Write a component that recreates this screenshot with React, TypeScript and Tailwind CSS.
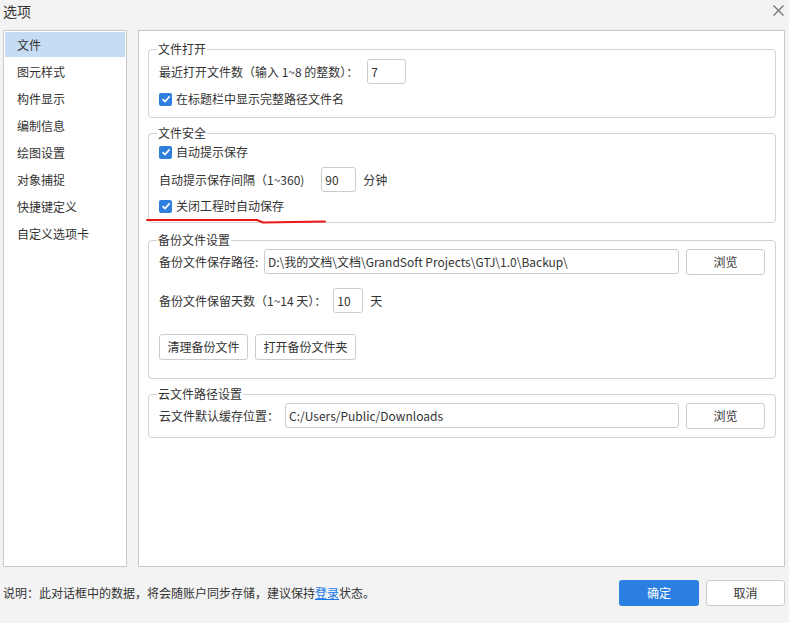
const font = "font-['Noto_Sans_CJK_SC','Noto_Sans',sans-serif]";

const navItems = ["文件", "图元样式", "构件显示", "编制信息", "绘图设置", "对象捕捉", "快捷键定义", "自定义选项卡"];

function Check({ label }: { label: string }) {
  return (
    <div className="flex h-[20px] items-center gap-[4px]">
      <span className="flex h-[13px] w-[13px] items-center justify-center rounded-[2px] bg-[#2f7fdf]">
        <svg width="10" height="10" viewBox="0 0 10 10" fill="none">
          <path d="M1.5 5.2 L4 7.6 L8.6 2.4" stroke="white" strokeWidth="1.6" />
        </svg>
      </span>
      <span>{label}</span>
    </div>
  );
}

function Group({ title, children, className = "" }: { title: string; children: React.ReactNode; className?: string }) {
  return (
    <fieldset className={`rounded-[4px] border border-[#d2d2d2] px-[10px] ${className}`}>
      <legend className="ml-[-2px] px-[1px] leading-[18px]">{title}</legend>
      {children}
    </fieldset>
  );
}

function Input({ value, className = "" }: { value: string; className?: string }) {
  return (
    <div className={`flex h-[25px] items-center rounded-[3px] border border-[#cccccc] bg-white px-[3px] ${className}`}>
      {value}
    </div>
  );
}

function Btn({ label, className = "" }: { label: string; className?: string }) {
  return (
    <div className={`flex h-[26px] items-center justify-center rounded-[3px] border border-[#cccccc] bg-white ${className}`}>
      {label}
    </div>
  );
}

export default function App() {
  return (
    <div className={`relative flex h-[623px] w-[789px] flex-col bg-[#f3f3f3] text-[12px] text-[#333] ${font}`}>
      {/* Title bar */}
      <div className="flex h-[30px] items-start justify-between pl-[3px] pr-[5px]">
        <span className="mt-[2px] text-[14px] leading-[18px]">选项</span>
        <svg className="mt-[5px]" width="11" height="11" viewBox="0 0 11 11" fill="none">
          <path d="M0.5 0.5 L10.5 10.5 M10.5 0.5 L0.5 10.5" stroke="#6f6f6f" strokeWidth="1.2" />
        </svg>
      </div>

      <div className="flex h-[537px] pl-[3px] pr-[4px]">
        {/* Sidebar */}
        <div className="flex w-[124px] flex-col gap-[2px] border border-[#c9c9c9] bg-white p-[1px]">
          {navItems.map((item, i) => (
            <div
              key={item}
              className={`flex h-[25px] items-center pl-[12px] ${i === 0 ? "bg-[#c5dcf2]" : ""}`}
            >
              {item}
            </div>
          ))}
        </div>

        {/* Content panel */}
        <div className="ml-[11px] flex flex-1 flex-col gap-[6px] border border-[#c9c9c9] bg-white pl-[9px] pr-[8px] pt-[9px]">
          <Group title="文件打开" className="pb-[8px]">
            <div className="mt-[1px] flex h-[25px] items-center">
              <span>最近打开文件数（输入 1~8 的整数）：</span>
              <Input value="7" className="ml-[9px] w-[39px]" />
            </div>
            <div className="mt-[5px]">
              <Check label="在标题栏中显示完整路径文件名" />
            </div>
          </Group>

          <Group title="文件安全" className="pb-[6px]">
            <Check label="自动提示保存" />
            <div className="mt-[5px] flex h-[25px] items-center">
              <span>自动提示保存间隔（1~360)</span>
              <Input value="90" className="ml-[17px] w-[35px]" />
              <span className="ml-[7px]">分钟</span>
            </div>
            <div className="mt-[4px]">
              <Check label="关闭工程时自动保存" />
            </div>
          </Group>

          <Group title="备份文件设置" className="mt-[2px] pb-[18px]">
            <div className="flex h-[25px] items-center">
              <span className="w-[105px]">备份文件保存路径:</span>
              <Input value="D:\我的文档\文档\GrandSoft Projects\GTJ\1.0\Backup\" className="flex-1" />
              <Btn label="浏览" className="ml-[7px] h-[25px] w-[79px]" />
            </div>
            <div className="mt-[14px] flex h-[25px] items-center">
              <span>备份文件保留天数（1~14 天）：</span>
              <Input value="10" className="ml-[7px] w-[30px]" />
              <span className="ml-[7px]">天</span>
            </div>
            <div className="mt-[21px] flex gap-[7px]">
              <Btn label="清理备份文件" className="w-[89px]" />
              <Btn label="打开备份文件夹" className="w-[101px]" />
            </div>
          </Group>

          <Group title="云文件路径设置" className="pb-[9px]">
            <div className="flex h-[25px] items-center">
              <span className="w-[126px]">云文件默认缓存位置：</span>
              <Input value="C:/Users/Public/Downloads" className="flex-1" />
              <Btn label="浏览" className="ml-[7px] h-[25px] w-[79px]" />
            </div>
          </Group>
        </div>
      </div>

      {/* Footer */}
      <div className="flex flex-1 items-start justify-between pl-[3px] pr-[4px] pt-[13px]">
        <span className="mt-[4px] leading-[18px]">
          说明：此对话框中的数据，将会随账户同步存储，建议保持
          <span className="text-[#1677e6] underline">登录</span>
          状态。
        </span>
        <div className="flex gap-[7px]">
          <div className="flex h-[26px] w-[80px] items-center justify-center rounded-[3px] bg-[#2b7fe0] text-white">
            确定
          </div>
          <Btn label="取消" className="w-[79px]" />
        </div>
      </div>

      {/* hand-drawn red annotation */}
      <svg className="absolute left-0 top-0" width="789" height="623" fill="none">
        <path d="M147 220 L257 220 L263 222.5 L325 221.5" stroke="#e81818" strokeWidth="2" strokeLinecap="round" strokeLinejoin="round" />
      </svg>
    </div>
  );
}
